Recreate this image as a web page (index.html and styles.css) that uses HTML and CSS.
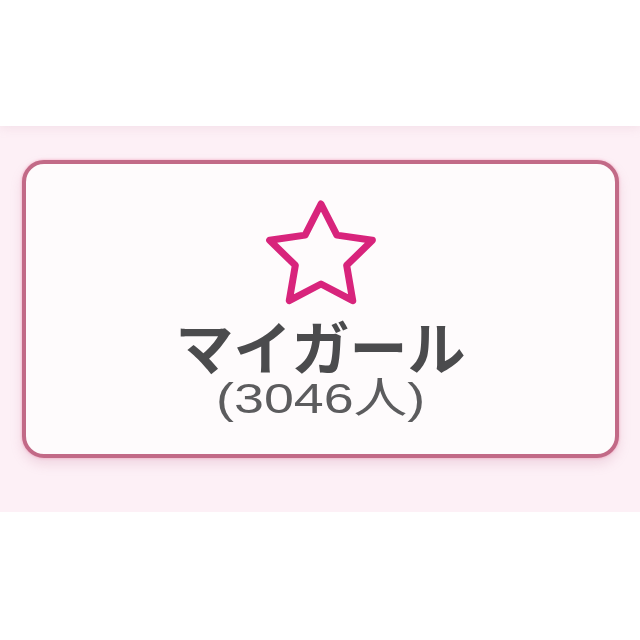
FILE: index.html
```html
<!DOCTYPE html>
<html lang="ja">
<head>
<meta charset="utf-8">
<link rel="stylesheet" href="styles.css">
</head>
<body>
<div class="header"></div>
<section class="panel">
  <a class="card" href="#">
    <svg class="star" width="120" height="108" viewBox="0 0 120 108" aria-hidden="true">
      <polygon points="60,4 75.87,35.16 111.36,40.31 85.68,65.34 91.74,100.69 60,84 28.26,100.69 34.32,65.34 8.64,40.31 44.13,35.16" fill="none" stroke="#d8247c" stroke-width="7" stroke-linejoin="round"/>
    </svg>
    <span class="title">マイガール</span>
    <span class="count">(3046人)</span>
  </a>
</section>
<div class="footer"></div>
</body>
</html>
```
FILE: styles.css
```css
html, body {
  margin: 0;
  padding: 0;
  background: #ffffff;
}
body {
  font-family: "Noto Sans CJK JP", "Noto Sans", sans-serif;
}
.header {
  height: 126px;
  background: #ffffff;
  position: relative;
  z-index: 1;
  box-shadow: 0 2px 10px rgba(200, 150, 170, 0.18);
}
.panel {
  background: #fdf0f6;
  padding: 34px 21px 54px 22px;
}
.card {
  display: flex;
  flex-direction: column;
  align-items: center;
  box-sizing: border-box;
  height: 298px;
  padding-top: 36px;
  background: #fefbfc;
  border: 4px solid #c26a87;
  border-radius: 22px;
  box-shadow: 0 0 3px rgba(240, 120, 160, 0.6), 0 6px 12px rgba(190, 120, 150, 0.22);
  text-decoration: none;
}
.star {
  display: block;
}
.title {
  margin-top: 8px;
  font-size: 58px;
  font-weight: 700;
  line-height: 58px;
  color: #4b4b4d;
}
.count {
  margin-top: 2px;
  font-family: "Liberation Sans", "Noto Sans CJK JP", sans-serif;
  font-size: 43px;
  line-height: 44px;
  color: #5c5c5e;
  transform: scaleX(1.25);
}
.footer {
  height: 128px;
}
```
